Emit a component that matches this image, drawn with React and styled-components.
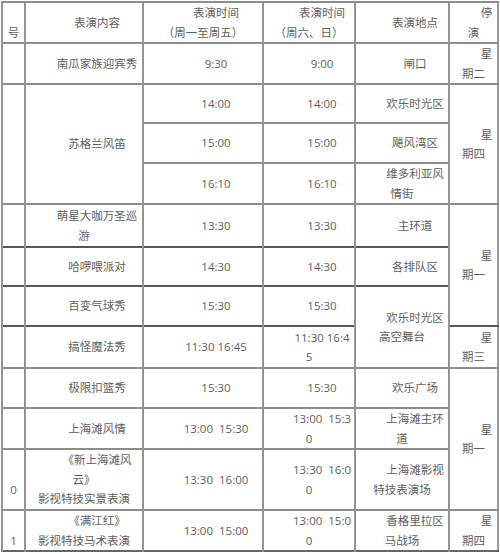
import React from "react";
import styled, { createGlobalStyle } from "styled-components";

const Global = createGlobalStyle`
  html, body { margin: 0; padding: 0; background: #fff; }
  body { font-family: "Open Sans", "Noto Sans CJK SC", sans-serif; }
`;

const Page = styled.div`
  width: 500px;
  height: 554px;
  overflow: hidden;
  padding: 1px 0 0 1px;
  box-sizing: border-box;
`;

const Table = styled.table`
  border-collapse: collapse;
  table-layout: fixed;
  width: 496px;
  border-top: 2px solid #6e6e6e;
  border-right: 2px solid #9a9a9a;
  border-bottom: 2px solid #666;
  color: #5e5e5e;
  font-size: 11.5px;
  line-height: 19.5px;
`;

const Row = styled.tr`
  height: ${(p) => p.$h}px;
`;

const Cell = styled.td`
  padding: 0;
  border-top: 2px solid ${(p) => (p.$dark ? "#555" : "#8c8c8c")};
  border-left: 2px solid #939393;
  text-align: center;
  text-indent: ${(p) => p.$indent}px;
  vertical-align: middle;
  white-space: nowrap;
  overflow: hidden;
`;

const COLS = [23, 118, 120, 92, 94, 49];

const rows = [
  { h: 41, cells: [{ t: ["\u00a0", "号"] }, { t: ["表演内容"] }, { t: ["表演时间", "（周一至周五）"] }, { t: ["表演时间", "（周六、日）"] }, { t: ["表演地点"] }, { t: ["停", "演"] }] },
  { h: 41, cells: [{ t: [""] }, { t: ["南瓜家族迎宾秀"] }, { t: ["9:30"] }, { t: ["9:00"] }, { t: ["闸口"] }, { t: ["星", "期二"] }] },
  { h: 39, cells: [{ t: [""], rs: 3 }, { t: ["苏格兰风笛"], rs: 3 }, { t: ["14:00"] }, { t: ["14:00"] }, { t: ["欢乐时光区"] }, { t: ["星", "期四"], rs: 3 }] },
  { h: 40, cells: [{ t: ["15:00"] }, { t: ["15:00"] }, { t: ["飓风湾区"] }] },
  { h: 41, cells: [{ t: ["16:10"] }, { t: ["16:10"] }, { t: ["维多利亚风", "情街"] }] },
  { h: 43, cells: [{ t: [""] }, { t: ["萌星大咖万圣巡", "游"] }, { t: ["13:30"] }, { t: ["13:30"] }, { t: ["主环道"] }, { t: ["星", "期一"], rs: 3 }] },
  { h: 39, dark: true, cells: [{ t: [""] }, { t: ["哈啰喂派对"] }, { t: ["14:30"] }, { t: ["14:30"] }, { t: ["各排队区"] }] },
  { h: 40, dark: true, cells: [{ t: [""] }, { t: ["百变气球秀"] }, { t: ["15:30"] }, { t: ["15:30"] }, { t: ["欢乐时光区", "高空舞台"], rs: 2 }] },
  { h: 42, dark: true, cells: [{ t: [""] }, { t: ["搞怪魔法秀"] }, { t: ["11:30 16:45"] }, { t: ["11:30 16:4", "5"] }, { t: ["星", "期三"] }] },
  { h: 40, cells: [{ t: [""] }, { t: ["极限扣篮秀"] }, { t: ["15:30"] }, { t: ["15:30"] }, { t: ["欢乐广场"] }, { t: ["星", "期一"], rs: 3 }] },
  { h: 41, cells: [{ t: [""] }, { t: ["上海滩风情"] }, { t: ["13:00\u00a0 15:30"] }, { t: ["13:00\u00a0 15:3", "0"] }, { t: ["上海滩主环", "道"] }] },
  { h: 61, cells: [{ t: ["\u00a0", "0"] }, { t: ["《新上海滩风", "云》", "影视特技实景表演"] }, { t: ["13:30\u00a0 16:00"] }, { t: ["13:30\u00a0 16:0", "0"] }, { t: ["上海滩影视", "特技表演场"] }] },
  { h: 41, cells: [{ t: ["\u00a0", "1"] }, { t: ["《满江红》", "影视特技马术表演"] }, { t: ["13:00\u00a0 15:00"] }, { t: ["13:00\u00a0 15:0", "0"] }, { t: ["香格里拉区", "马战场"] }, { t: ["星", "期四"] }] },
];

function Lines({ lines }) {
  return lines.map((l, i) => (
    <React.Fragment key={i}>
      {i > 0 && <br />}
      {l}
    </React.Fragment>
  ));
}

export default function App() {
  return (
    <>
      <Global />
      <Page>
        <Table>
          <colgroup>
            {COLS.map((w, i) => (
              <col key={i} style={{ width: w }} />
            ))}
          </colgroup>
          <tbody>
            {rows.map((r, ri) => (
              <Row key={ri} $h={r.h}>
                {r.cells.map((c, ci) => (
                  <Cell key={ci} rowSpan={c.rs || 1} $dark={r.dark} $indent={26}>
                    <Lines lines={c.t} />
                  </Cell>
                ))}
              </Row>
            ))}
          </tbody>
        </Table>
      </Page>
    </>
  );
}
